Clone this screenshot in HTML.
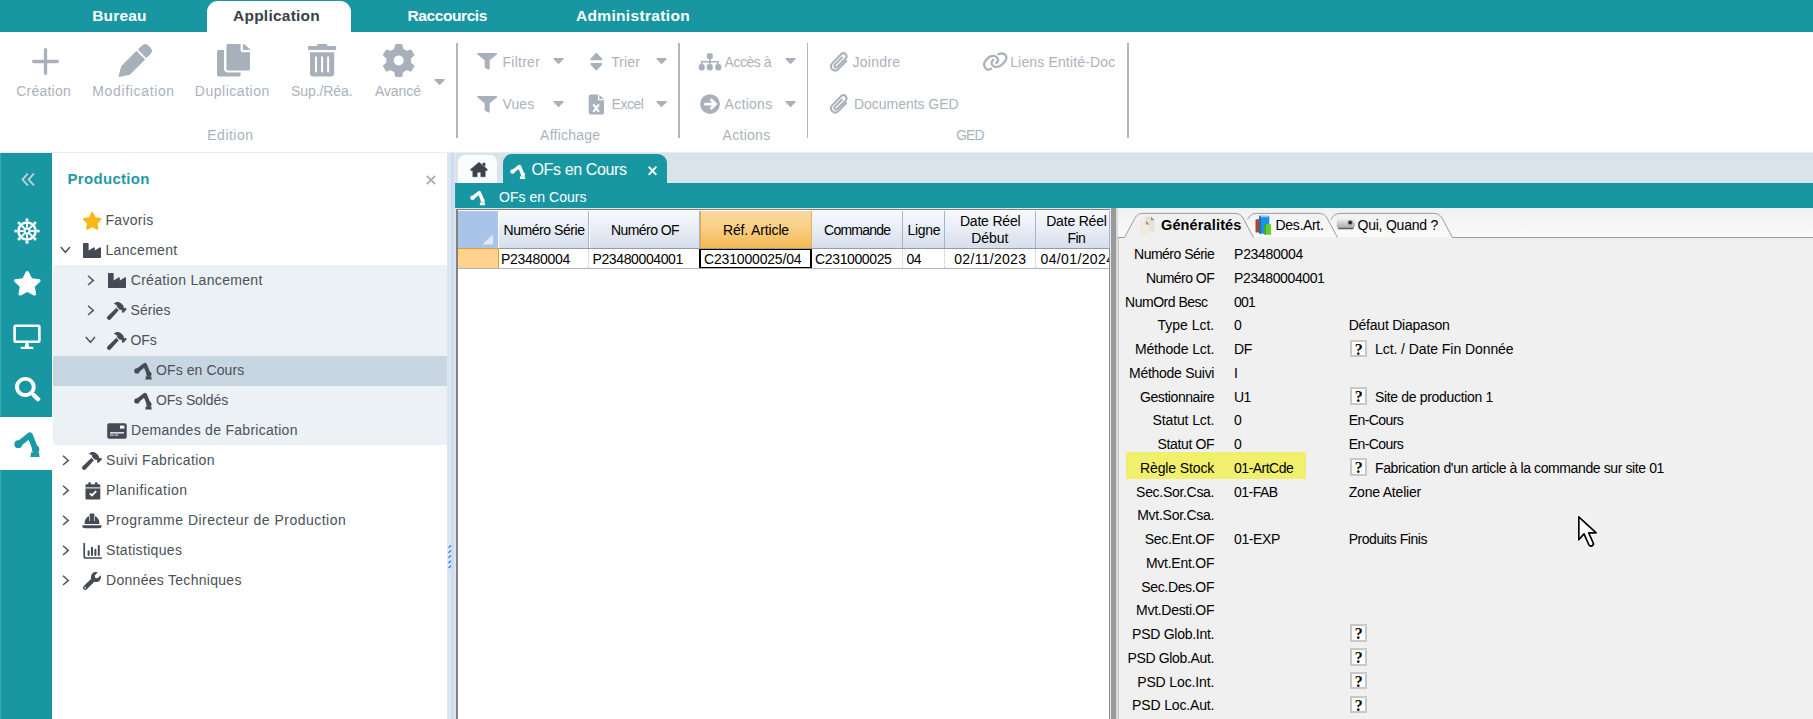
<!DOCTYPE html>
<html lang="fr"><head><meta charset="utf-8"><title>OFs en Cours</title>
<style>
html,body{margin:0;padding:0}
body{width:1813px;height:719px;overflow:hidden;position:relative;background:#fff;font-family:"Liberation Sans", sans-serif;}
.t{position:absolute;white-space:pre;line-height:20px;height:20px;}
.a{position:absolute}
svg{position:absolute;overflow:visible}

.teal{background:#1897a2}
.sep{position:absolute;top:43px;height:95px;width:1.4px;background:#b1b7c1}
.gh{position:absolute;top:211px;height:37px;background:linear-gradient(#f7f9fc 0%,#e9eef6 45%,#d6deeb 100%);border-right:1px solid #9fb6d4;box-sizing:border-box}
.gc{position:absolute;top:249px;height:19px;background:#fff;border-right:1px dotted #c4c4c4;box-sizing:border-box}
.q{position:absolute;left:1350.2px;width:17px;height:17.5px;box-sizing:border-box;border:2px solid #c8c8c8;background:#fff;font-family:"Liberation Serif",serif;font-weight:700;font-size:16px;line-height:15.5px;text-align:center;color:#000}

</style></head><body>
<div class="a" style="left:0px;top:0px;width:1813px;height:32px;background:#1897a2;"></div>
<div class="a" style="left:207px;top:1px;width:144px;height:31px;background:#fff;border-radius:11px 11px 0 0"></div>
<div class="sep" style="left:456.4px"></div>
<div class="sep" style="left:678.4px"></div>
<div class="sep" style="left:807.1px"></div>
<div class="sep" style="left:1127.2px"></div>
<div class="a" style="left:0px;top:152px;width:1813px;height:567px;background:#d9e3ec;"></div>
<div class="a" style="left:0px;top:152px;width:1813px;height:1px;background:#e6edf3;"></div>
<div class="a" style="left:0px;top:153px;width:52.5px;height:566px;background:#1897a2;"></div>
<div class="a" style="left:0px;top:153px;width:1px;height:566px;background:#3ba8b2;"></div>
<div class="a" style="left:0px;top:416.5px;width:52.5px;height:53.8px;background:#fff;"></div>
<div class="a" style="left:52px;top:153px;width:395px;height:566px;background:#fff;"></div>
<div class="a" style="left:53.2px;top:265.4px;width:394px;height:180px;background:#ecf1f5;"></div>
<div class="a" style="left:53.2px;top:355.5px;width:394px;height:30px;background:#c8d6e2;"></div>
<div class="a" style="left:447px;top:153px;width:8.5px;height:566px;background:linear-gradient(90deg,#dde6ef 0%,#dbe5ee 42%,#c9dcf5 50%,#c9dcf5 70%,#dbe4ec 80%,#dfe6ee 100%);"></div>
<div class="a" style="left:458px;top:155px;width:39px;height:28px;background:#fbfcfd;border-radius:7px 7px 0 0"></div>
<div class="a" style="left:503.3px;top:154.4px;width:163.5px;height:29.6px;background:#1897a2;border-radius:9px 9px 0 0"></div>
<div class="a" style="left:455px;top:183px;width:1358px;height:25px;background:#1897a2;"></div>
<div class="a" style="left:455px;top:208px;width:656px;height:511px;background:#fff;"></div>
<div class="a" style="left:455px;top:208px;width:656px;height:1.5px;background:#e2e2e2;"></div>
<div class="a" style="left:455px;top:208px;width:1px;height:511px;background:#e2e2e2;"></div>
<div class="a" style="left:456.2px;top:209.5px;width:1.6px;height:510px;background:#828282;"></div>
<div class="a" style="left:456px;top:209.2px;width:654px;height:1.2px;background:#808080;"></div>
<div class="a" style="left:458px;top:248px;width:652px;height:1px;background:#9a9a9a;"></div>
<div class="a" style="left:458.4px;top:211px;width:39.9px;height:37px;background:#a9c4e9;"></div>
<svg style="left:482px;top:233.500px" width="11" height="11" viewBox="0 0 11 11"><path d="M11 0.500V10.500H0.500z" fill="#e2eaf7"/></svg>
<div class="gh" style="left:499px;width:90px"></div>
<div class="gc" style="left:499px;width:90px"></div>
<div class="gh" style="left:590px;width:110px"></div>
<div class="gc" style="left:590px;width:110px"></div>
<div class="gh" style="left:700px;width:112px;background:linear-gradient(#f9d9a0 0%,#f8cf85 45%,#f2b953 100%);border-right:1px solid #e8b25a;border-left:1px solid #f0a63c"></div>
<div class="gc" style="left:700px;width:112px"></div>
<div class="gh" style="left:812px;width:91px"></div>
<div class="gc" style="left:812px;width:91px"></div>
<div class="gh" style="left:903px;width:42px"></div>
<div class="gc" style="left:903px;width:42px"></div>
<div class="gh" style="left:945px;width:91px"></div>
<div class="gc" style="left:945px;width:91px"></div>
<div class="gh" style="left:1036px;width:74px"></div>
<div class="gc" style="left:1036px;width:74px"></div>
<div class="a" style="left:457.5px;top:248px;width:41.2px;height:20.6px;background:#ffd28e;border-right:1px solid #f29536;border-top:1px solid #f29536;border-bottom:1px solid #f29536;box-sizing:border-box"></div>
<div class="a" style="left:458px;top:268px;width:652px;height:1px;background:#b4b4b4;"></div>
<div class="a" style="left:699.2px;top:248.6px;width:113.3px;height:19.6px;background:#fff;border:2px solid #000;border-top-width:1.5px;border-bottom-width:1.5px;box-sizing:border-box"></div>
<div class="a" style="left:1036px;top:249px;width:73px;height:19px;overflow:hidden"><span class="t" style="left:4.5px;top:-0.3px;font-size:14px;letter-spacing:0.38px">04/01/2024</span></div>
<div class="a" style="left:1108.8px;top:249px;width:1.3px;height:470px;background:#8c8c8c;"></div>
<div class="a" style="left:1110.1px;top:208px;width:1.1px;height:511px;background:#e8e8e8;"></div>
<div class="a" style="left:1111.2px;top:208px;width:4.6px;height:511px;background:#9a9a9a;"></div>
<div class="a" style="left:1115.8px;top:208px;width:1.8px;height:511px;background:#dadada;"></div>
<div class="a" style="left:1117.6px;top:208px;width:696px;height:511px;background:#f0f0f0;"></div>
<div class="a" style="left:1117.6px;top:208px;width:696px;height:29px;background:linear-gradient(#f0f0f0,#fafafa);"></div>
<div class="a" style="left:1117.6px;top:237.5px;width:1.1px;height:482px;background:#c6c6c6;"></div>
<svg style="left:1116px;top:208px" width="697" height="32" viewBox="0 0 697 32">
<path d="M215 11.500 Q218 5.400 224 5.400 L318 5.400 Q323.500 5.400 326 10 L336.500 29.500 L697 29.500" fill="none" stroke="#9b9b9b" stroke-width="1"/>
<path d="M131.500 11.500 Q134.500 5.400 140.500 5.400 L203 5.400 Q208.500 5.400 211 10 L221.500 29.500" fill="none" stroke="#9b9b9b" stroke-width="1"/>
<path d="M2 29.500 L8.500 29.500 L19 10 Q21.500 5.400 27 5.400 L119 5.400 Q124.500 5.400 127 10 L137.500 29.500" fill="#f0f0f0" stroke="#9b9b9b" stroke-width="1"/>
</svg>
<div class="a" style="left:1126px;top:452px;width:180px;height:27px;background:#f1f06c;"></div>
<div class="q" style="top:339.6px">?</div>
<div class="q" style="top:387.0px">?</div>
<div class="q" style="top:458.3px">?</div>
<div class="q" style="top:624.4px">?</div>
<div class="q" style="top:648.2px">?</div>
<div class="q" style="top:671.9px">?</div>
<div class="q" style="top:695.7px">?</div>
<svg style="left:448px;top:545px" width="6" height="24" viewBox="0 0 6 24"><path d="M0.500 2.6l2.500-2.200" stroke="#2f7fe0" stroke-width="1.300"/><path d="M0.500 7.7l2.500-2.200" stroke="#2f7fe0" stroke-width="1.300"/><path d="M0.500 12.8l2.500-2.200" stroke="#2f7fe0" stroke-width="1.300"/><path d="M0.500 17.9l2.500-2.200" stroke="#2f7fe0" stroke-width="1.300"/><path d="M0.500 23.0l2.500-2.200" stroke="#2f7fe0" stroke-width="1.300"/></svg>
<svg style="left:31px;top:47px" width="29" height="29" viewBox="0 0 29 29"><path d="M14.5 2.700V26.300M2.700 14.500H26.300" stroke="#a8b0bb" stroke-width="3.300" stroke-linecap="round" fill="none"/></svg>
<svg style="left:118px;top:44px" width="34" height="33" viewBox="0 0 34 33"><path d="M1 32.500 L3.800 22 L18.500 7.300 L26.700 15.500 L12 30.200 Z" fill="#a8b0bb" stroke="#a8b0bb" stroke-width="1" stroke-linejoin="round"/><path d="M20.300 5.600 L24.600 1.500 Q27.300 -0.700 30 1.600 L32.400 4 Q34.700 6.700 32.500 9.400 L28.300 13.700 Z" fill="#a8b0bb" stroke="#a8b0bb" stroke-width="1" stroke-linejoin="round"/></svg>
<svg style="left:217.4px;top:44.2px" width="33" height="32.6" viewBox="0 0 448 512" preserveAspectRatio="none"><path d="M320 448v40c0 13.255-10.745 24-24 24H24c-13.255 0-24-10.745-24-24V120c0-13.255 10.745-24 24-24h72v296c0 30.879 25.121 56 56 56h168zm0-344V0H152c-13.255 0-24 10.745-24 24v368c0 13.255 10.745 24 24 24h272c13.255 0 24-10.745 24-24V128H344c-13.200 0-24-10.800-24-24zm120.971-31.029L375.029 7.029A24 24 0 0 0 358.059 0H352v96h96v-6.059a24 24 0 0 0-7.029-16.970z" fill="#a8b0bb"/></svg>
<svg style="left:307.7px;top:44.2px" width="28.2" height="32.6" viewBox="0 0 448 512" preserveAspectRatio="none"><path d="M32 464a48 48 0 0 0 48 48h288a48 48 0 0 0 48-48V128H32zm272-256a16 16 0 0 1 32 0v224a16 16 0 0 1-32 0zm-96 0a16 16 0 0 1 32 0v224a16 16 0 0 1-32 0zm-96 0a16 16 0 0 1 32 0v224a16 16 0 0 1-32 0zM432 32H312l-9.400-18.700A24 24 0 0 0 281.100 0H166.800a23.720 23.720 0 0 0-21.400 13.300L136 32H16A16 16 0 0 0 0 48v32a16 16 0 0 0 16 16h416a16 16 0 0 0 16-16V48a16 16 0 0 0-16-16z" fill="#a8b0bb"/></svg>
<svg style="left:382px;top:44px" width="33" height="33" viewBox="0 0 33 33"><path d="M13.16 5.45 L14.04 1.03 L19.36 1.03 L20.24 5.45 L24.50 7.91 L28.77 6.46 L31.43 11.06 L28.04 14.04 L28.04 18.96 L31.43 21.94 L28.77 26.54 L24.50 25.09 L20.24 27.55 L19.36 31.97 L14.04 31.97 L13.16 27.55 L8.90 25.09 L4.63 26.54 L1.97 21.94 L5.36 18.96 L5.36 14.04 L1.97 11.06 L4.63 6.46 L8.90 7.91Z M22.70 16.50 A6.0 6.0 0 1 0 10.70 16.50 A6.0 6.0 0 1 0 22.70 16.50Z" fill="#a8b0bb" fill-rule="evenodd" stroke="#a8b0bb" stroke-width="2" stroke-linejoin="round"/></svg>
<svg style="left:433.8px;top:79.1px" width="11.2" height="6.2" viewBox="0 192 320 176" preserveAspectRatio="none"><path d="M31.300 192h257.300c17.800 0 26.700 21.500 14.100 34.100L174.100 354.800c-7.800 7.800-20.500 7.800-28.300 0L17.200 226.100C4.600 213.500 13.500 192 31.300 192z" fill="#a8b0bb"/></svg>
<svg style="left:477px;top:53.4px" width="20.3" height="16.6" viewBox="0 0 512 512" preserveAspectRatio="none"><path d="M487.976 0H24.028C2.710 0-8.047 25.866 7.058 40.971L192 225.941V432c0 7.831 3.821 15.170 10.237 19.662l80 55.980C298.020 518.690 320 507.493 320 487.980V225.941l184.947-184.970C520.021 25.896 509.338 0 487.976 0z" fill="#a8b0bb"/></svg>
<svg style="left:477px;top:95.6px" width="20.3" height="16.6" viewBox="0 0 512 512" preserveAspectRatio="none"><path d="M487.976 0H24.028C2.710 0-8.047 25.866 7.058 40.971L192 225.941V432c0 7.831 3.821 15.170 10.237 19.662l80 55.980C298.020 518.690 320 507.493 320 487.980V225.941l184.947-184.970C520.021 25.896 509.338 0 487.976 0z" fill="#a8b0bb"/></svg>
<svg style="left:552.5px;top:58.3px" width="11.1" height="6.3" viewBox="0 192 320 176" preserveAspectRatio="none"><path d="M31.300 192h257.300c17.800 0 26.700 21.500 14.100 34.100L174.100 354.800c-7.800 7.800-20.500 7.800-28.300 0L17.200 226.100C4.600 213.500 13.500 192 31.300 192z" fill="#a8b0bb"/></svg>
<svg style="left:656.4px;top:58.3px" width="11.1" height="6.3" viewBox="0 192 320 176" preserveAspectRatio="none"><path d="M31.300 192h257.300c17.800 0 26.700 21.500 14.100 34.100L174.100 354.800c-7.800 7.800-20.500 7.800-28.300 0L17.200 226.100C4.600 213.500 13.500 192 31.300 192z" fill="#a8b0bb"/></svg>
<svg style="left:785.2px;top:58.3px" width="11.1" height="6.3" viewBox="0 192 320 176" preserveAspectRatio="none"><path d="M31.300 192h257.300c17.800 0 26.700 21.500 14.100 34.100L174.100 354.800c-7.800 7.800-20.500 7.800-28.300 0L17.200 226.100C4.600 213.500 13.500 192 31.300 192z" fill="#a8b0bb"/></svg>
<svg style="left:552.5px;top:101px" width="11.1" height="6.3" viewBox="0 192 320 176" preserveAspectRatio="none"><path d="M31.300 192h257.300c17.800 0 26.700 21.500 14.100 34.100L174.100 354.800c-7.800 7.800-20.500 7.800-28.300 0L17.200 226.100C4.600 213.500 13.500 192 31.300 192z" fill="#a8b0bb"/></svg>
<svg style="left:656.4px;top:101px" width="11.1" height="6.3" viewBox="0 192 320 176" preserveAspectRatio="none"><path d="M31.300 192h257.300c17.800 0 26.700 21.500 14.100 34.100L174.100 354.800c-7.800 7.800-20.500 7.800-28.300 0L17.200 226.100C4.600 213.500 13.500 192 31.300 192z" fill="#a8b0bb"/></svg>
<svg style="left:785.2px;top:101px" width="11.1" height="6.3" viewBox="0 192 320 176" preserveAspectRatio="none"><path d="M31.300 192h257.300c17.800 0 26.700 21.500 14.100 34.100L174.100 354.800c-7.800 7.800-20.500 7.800-28.300 0L17.200 226.100C4.600 213.500 13.500 192 31.300 192z" fill="#a8b0bb"/></svg>
<svg style="left:589.9px;top:53.4px" width="12.7" height="17.3" viewBox="9 57 302 398" preserveAspectRatio="none"><path d="M41 288h238c21.400 0 32.100 25.900 17 41L177 448c-9.400 9.400-24.600 9.400-33.900 0L24 329c-15.100-15.100-4.400-41 17-41zm255-105L177 64c-9.400-9.400-24.600-9.400-33.900 0L24 183c-15.100 15.100-4.400 41 17 41h238c21.400 0 32.100-25.900 17-41z" fill="#a8b0bb"/></svg>
<svg style="left:588px;top:94px" width="17" height="21" viewBox="0 0 17 21"><path d="M2.700 0.500 H10 V6.300 H16 V18.500 Q16 20.500 14 20.500 H2.700 Q0.700 20.500 0.700 18.500 V2.500 Q0.700 0.500 2.700 0.500Z M11.300 0.700 L15.800 5 H11.300Z" fill="#a8b0bb" /><path d="M5.300 10.300 L11 18 M11 10.300 L5.300 18" stroke="#fff" stroke-width="2.100" fill="none"/></svg>
<svg style="left:698px;top:53px" width="24" height="18" viewBox="0 0 24 18"><rect x="8.900" y="0.300" width="5.800" height="5.600" rx="1.300" fill="#a8b0bb"/><path d="M11.800 5.500 V11.500 M3.700 11.500 V8.800 H19.900 V11.500" stroke="#a8b0bb" stroke-width="1.600" fill="none"/><rect x="0.7" y="11" width="6" height="6.400" rx="2.300" fill="#a8b0bb"/><rect x="8.8" y="11" width="6" height="6.400" rx="2.300" fill="#a8b0bb"/><rect x="17.3" y="11" width="6" height="6.400" rx="2.300" fill="#a8b0bb"/></svg>
<svg style="left:700px;top:94px" width="20" height="20" viewBox="0 0 20 20"><circle cx="10" cy="10.100" r="9.900" fill="#a8b0bb"/><path d="M4.300 10.100 H13.800 M10.600 5.300 L15.500 10.100 L10.600 14.900" stroke="#fff" stroke-width="2.800" fill="none" stroke-linecap="butt" stroke-linejoin="miter"/></svg>
<svg style="left:829.2px;top:52.3px" width="19.6" height="20.7" viewBox="0 0 18 19"><path d="M15.800 8.300 L8.600 15.700 Q5.700 18.400 3 15.900 Q0.400 13.100 3.100 10.200 L11.300 1.900 Q13.300 0.100 15.300 1.900 Q17.100 3.900 15.300 5.900 L7.500 13.800 Q6.300 14.800 5.300 13.800 Q4.400 12.700 5.400 11.600 L11.900 5" stroke="#a8b0bb" stroke-width="1.850" fill="none" stroke-linecap="round" stroke-linejoin="round"/></svg>
<svg style="left:829.2px;top:93.7px" width="19.6" height="20.7" viewBox="0 0 18 19"><path d="M15.800 8.300 L8.600 15.700 Q5.700 18.400 3 15.900 Q0.400 13.100 3.100 10.200 L11.300 1.900 Q13.300 0.100 15.300 1.900 Q17.100 3.900 15.300 5.900 L7.500 13.800 Q6.300 14.800 5.300 13.800 Q4.400 12.700 5.400 11.600 L11.900 5" stroke="#a8b0bb" stroke-width="1.850" fill="none" stroke-linecap="round" stroke-linejoin="round"/></svg>
<svg style="left:975px;top:45px" width="40" height="35" viewBox="0 0 40 35"><g fill="none" stroke="#a8b0bb" stroke-width="2.200" stroke-linecap="round"><path d="M16.30 23.70 C15.70 23.87 13.75 24.92 12.70 24.70 C11.65 24.48 10.62 23.35 10.00 22.40 C9.38 21.45 8.83 20.18 9.00 19.00 C9.17 17.82 10.05 16.52 11.00 15.30 C11.95 14.08 13.48 12.45 14.70 11.70 C15.92 10.95 17.13 10.70 18.30 10.80 C19.47 10.90 20.88 11.55 21.70 12.30 C22.52 13.05 23.27 14.30 23.20 15.30 C23.13 16.30 21.62 17.80 21.30 18.30"/><path d="M23.20 9.30 C23.78 9.13 25.62 8.30 26.70 8.30 C27.78 8.30 28.92 8.57 29.70 9.30 C30.48 10.03 31.40 11.47 31.40 12.70 C31.40 13.93 30.65 15.37 29.70 16.70 C28.75 18.03 27.03 19.82 25.70 20.70 C24.37 21.58 22.93 21.95 21.70 22.00 C20.47 22.05 19.17 21.67 18.30 21.00 C17.43 20.33 16.55 19.05 16.50 18.00 C16.45 16.95 17.75 15.25 18.00 14.70"/></g></svg>
<svg style="left:21px;top:173px" width="14" height="13" viewBox="0 0 14 13"><path d="M4.800 0.500 L0.800 6.500 L4.800 12.500 M9.300 0.500 L5.300 6.500 L9.300 12.500" transform="translate(0.4,0) scale(1.35,1)" stroke="#bdd3d6" stroke-width="1.500" fill="none"/></svg>
<svg style="left:14.2px;top:218.4px" width="26" height="26" viewBox="0 0 26 26"><g transform="translate(13 13)" fill="none" stroke="#fff"><circle r="8.600" stroke-width="2.500"/><circle r="2.500" stroke-width="1.900"/><path d="M3.20 0.00 L7.80 0.00" stroke-width="1.800"/><circle cx="11.20" cy="0.00" r="1.600" fill="#fff" stroke="none"/><path d="M2.26 2.26 L5.52 5.52" stroke-width="1.800"/><circle cx="7.92" cy="7.92" r="1.600" fill="#fff" stroke="none"/><path d="M0.00 3.20 L0.00 7.80" stroke-width="1.800"/><circle cx="0.00" cy="11.20" r="1.600" fill="#fff" stroke="none"/><path d="M-2.26 2.26 L-5.52 5.52" stroke-width="1.800"/><circle cx="-7.92" cy="7.92" r="1.600" fill="#fff" stroke="none"/><path d="M-3.20 0.00 L-7.80 0.00" stroke-width="1.800"/><circle cx="-11.20" cy="0.00" r="1.600" fill="#fff" stroke="none"/><path d="M-2.26 -2.26 L-5.52 -5.52" stroke-width="1.800"/><circle cx="-7.92" cy="-7.92" r="1.600" fill="#fff" stroke="none"/><path d="M-0.00 -3.20 L-0.00 -7.80" stroke-width="1.800"/><circle cx="-0.00" cy="-11.20" r="1.600" fill="#fff" stroke="none"/><path d="M2.26 -2.26 L5.52 -5.52" stroke-width="1.800"/><circle cx="7.92" cy="-7.92" r="1.600" fill="#fff" stroke="none"/></g></svg>
<svg style="left:13.6px;top:271px" width="26.6" height="24.5" viewBox="20 0 536 510" preserveAspectRatio="none"><path d="M259.3 17.8L194 150.2 47.9 171.5c-26.200 3.800-36.700 36.100-17.700 54.600l105.700 103-25 145.500c-4.500 26.300 23.200 46 46.400 33.700L288 439.600l130.700 68.700c23.200 12.200 50.900-7.400 46.400-33.700l-25-145.500 105.700-103c19-18.500 8.500-50.800-17.700-54.600L382 150.200 316.700 17.800c-11.700-23.600-45.600-23.900-57.400 0z" fill="#fff"/></svg>
<svg style="left:13px;top:323.5px" width="28" height="26" viewBox="0 0 28 26"><path d="M2.800 0.500 H25.200 Q27.700 0.500 27.700 3 V16.500 Q27.700 19 25.200 19 H2.800 Q0.300 19 0.300 16.500 V3 Q0.300 0.500 2.800 0.500Z M2.900 3.100 V16.400 H25.100 V3.100Z" fill="#fff" fill-rule="evenodd"/><path d="M12.500 19 h3 l0.600 4 h-4.200z" fill="#fff"/><rect x="7.600" y="22.800" width="12.800" height="2.200" rx="1.100" fill="#fff"/></svg>
<svg style="left:14.5px;top:377px" width="25.5" height="24.5" viewBox="0 0 512 512" preserveAspectRatio="none"><path d="M505 442.700L405.300 343c-4.500-4.500-10.600-7-17-7H372c27.600-35.300 44-79.700 44-128C416 93.100 322.900 0 208 0S0 93.100 0 208s93.100 208 208 208c48.300 0 92.700-16.400 128-44v16.300c0 6.400 2.500 12.500 7 17l99.700 99.700c9.400 9.400 24.600 9.400 33.900 0l28.300-28.300c9.400-9.400 9.400-24.600.1-34zM208 336c-70.700 0-128-57.200-128-128 0-70.700 57.200-128 128-128 70.700 0 128 57.200 128 128 0 70.700-57.200 128-128 128z" fill="#fff"/></svg>
<svg style="left:13.7px;top:431px" width="26" height="26" viewBox="0 0 26 26" preserveAspectRatio="none"><circle cx="4.300" cy="13.200" r="3.900" fill="#1a9aa6"/><path d="M7 11.300 L15.800 4.200 L21.200 17.500" stroke="#1a9aa6" stroke-width="5.800" fill="none" stroke-linejoin="round" stroke-linecap="round"/><circle cx="21.600" cy="18.300" r="3.700" fill="#1a9aa6"/><path d="M17.200 21.300 H25 L25.600 26 H16.400Z" fill="#1a9aa6"/></svg>
<svg style="left:82.5px;top:211.5px" width="18.5" height="17.8" viewBox="20 0 536 510" preserveAspectRatio="none"><path d="M259.3 17.8L194 150.2 47.9 171.5c-26.200 3.800-36.700 36.100-17.700 54.600l105.700 103-25 145.500c-4.500 26.300 23.200 46 46.400 33.700L288 439.600l130.700 68.700c23.200 12.200 50.900-7.400 46.400-33.700l-25-145.500 105.700-103c19-18.500 8.500-50.800-17.700-54.600L382 150.200 316.700 17.800c-11.700-23.600-45.600-23.900-57.400 0z" fill="#fdb714"/></svg>
<svg style="left:82.5px;top:243px" width="18" height="15" viewBox="0 32 512 448" preserveAspectRatio="none"><path d="M475.115 163.781L336 252.309v-68.280c0-18.916-20.931-30.399-36.885-20.248L160 252.309V56c0-13.255-10.745-24-24-24H24C10.745 32 0 42.745 0 56v400c0 13.255 10.745 24 24 24h464c13.255 0 24-10.745 24-24V184.029c0-18.917-20.931-30.399-36.885-20.248z" fill="#454a54"/></svg>
<svg style="left:108px;top:273px" width="18" height="15" viewBox="0 32 512 448" preserveAspectRatio="none"><path d="M475.115 163.781L336 252.309v-68.280c0-18.916-20.931-30.399-36.885-20.248L160 252.309V56c0-13.255-10.745-24-24-24H24C10.745 32 0 42.745 0 56v400c0 13.255 10.745 24 24 24h464c13.255 0 24-10.745 24-24V184.029c0-18.917-20.931-30.399-36.885-20.248z" fill="#454a54"/></svg>
<svg style="left:106.7px;top:301.5px" width="19.7" height="18" viewBox="0 0 576 512" preserveAspectRatio="none"><path d="M571.310 193.940l-22.630-22.630c-6.250-6.250-16.380-6.250-22.630 0l-11.310 11.310-28.900-28.900c5.630-21.310.360-44.900-16.350-61.610l-45.250-45.250c-62.480-62.480-163.790-62.480-226.280 0l90.510 45.250v18.750c0 16.970 6.740 33.250 18.750 45.250l49.140 49.140c16.710 16.710 40.300 21.980 61.610 16.350l28.900 28.900-11.310 11.310c-6.250 6.250-6.250 16.380 0 22.630l22.630 22.630c6.250 6.250 16.380 6.250 22.630 0l90.510-90.510c6.230-6.240 6.230-16.370-.020-22.620zm-286.720-15.200c-3.700-3.700-6.840-7.790-9.850-11.950L19.640 404.960c-25.570 23.880-26.260 64.190-1.530 88.930s65.050 24.050 88.930-1.530l238.130-255.070c-3.960-2.910-7.900-5.870-11.440-9.410l-49.140-49.140z" fill="#454a54"/></svg>
<svg style="left:106.7px;top:331.5px" width="19.7" height="18" viewBox="0 0 576 512" preserveAspectRatio="none"><path d="M571.310 193.940l-22.630-22.630c-6.250-6.250-16.380-6.250-22.630 0l-11.310 11.310-28.900-28.900c5.630-21.310.360-44.900-16.350-61.610l-45.250-45.250c-62.480-62.480-163.790-62.480-226.280 0l90.510 45.250v18.750c0 16.970 6.740 33.250 18.750 45.250l49.140 49.140c16.710 16.710 40.300 21.980 61.610 16.350l28.900 28.900-11.310 11.310c-6.250 6.250-6.250 16.380 0 22.630l22.630 22.630c6.250 6.250 16.380 6.250 22.630 0l90.510-90.510c6.230-6.240 6.230-16.370-.020-22.620zm-286.720-15.200c-3.700-3.700-6.840-7.790-9.850-11.950L19.640 404.960c-25.570 23.880-26.260 64.190-1.530 88.930s65.050 24.050 88.930-1.530l238.130-255.070c-3.960-2.910-7.900-5.870-11.440-9.410l-49.140-49.140z" fill="#454a54"/></svg>
<svg style="left:81.7px;top:451.5px" width="20" height="18" viewBox="0 0 576 512" preserveAspectRatio="none"><path d="M571.310 193.940l-22.630-22.630c-6.250-6.250-16.380-6.250-22.630 0l-11.310 11.310-28.900-28.900c5.630-21.310.360-44.900-16.350-61.610l-45.250-45.250c-62.480-62.480-163.790-62.480-226.280 0l90.510 45.250v18.750c0 16.970 6.740 33.250 18.750 45.250l49.140 49.140c16.710 16.710 40.300 21.980 61.610 16.350l28.900 28.900-11.310 11.310c-6.250 6.250-6.250 16.380 0 22.630l22.630 22.630c6.250 6.250 16.380 6.250 22.630 0l90.510-90.510c6.230-6.240 6.230-16.370-.020-22.620zm-286.720-15.200c-3.700-3.700-6.840-7.790-9.850-11.950L19.640 404.960c-25.570 23.880-26.260 64.190-1.530 88.930s65.050 24.050 88.930-1.530l238.130-255.070c-3.960-2.910-7.900-5.870-11.440-9.410l-49.140-49.140z" fill="#454a54"/></svg>
<svg style="left:133.5px;top:361.7px" width="18" height="17.5" viewBox="0 0 26 26" preserveAspectRatio="none"><circle cx="4.300" cy="13.200" r="3.900" fill="#454a54"/><path d="M7 11.300 L15.800 4.200 L21.200 17.500" stroke="#454a54" stroke-width="5.800" fill="none" stroke-linejoin="round" stroke-linecap="round"/><circle cx="21.600" cy="18.300" r="3.700" fill="#454a54"/><path d="M17.200 21.300 H25 L25.600 26 H16.400Z" fill="#454a54"/></svg>
<svg style="left:133.5px;top:391.7px" width="18" height="17.5" viewBox="0 0 26 26" preserveAspectRatio="none"><circle cx="4.300" cy="13.200" r="3.900" fill="#454a54"/><path d="M7 11.300 L15.800 4.200 L21.200 17.500" stroke="#454a54" stroke-width="5.800" fill="none" stroke-linejoin="round" stroke-linecap="round"/><circle cx="21.600" cy="18.300" r="3.700" fill="#454a54"/><path d="M17.200 21.300 H25 L25.600 26 H16.400Z" fill="#454a54"/></svg>
<svg style="left:107px;top:422.5px" width="20" height="16" viewBox="0 0 20 16"><rect x="0.200" y="0.200" width="19.500" height="15.500" rx="2" fill="#454a54"/><rect x="13" y="2.600" width="4.400" height="3" fill="#fff"/><rect x="3" y="9.200" width="14" height="1.300" fill="#fff"/><rect x="3" y="11.500" width="3.600" height="1.200" fill="#cfd3d8"/><rect x="7.600" y="11.500" width="3.600" height="1.200" fill="#cfd3d8"/></svg>
<svg style="left:84.5px;top:481.5px" width="16" height="18" viewBox="0 0 16 18"><path d="M1.800 2.300 H14 Q15.300 2.300 15.300 3.600 V16.300 Q15.300 17.600 14 17.600 H1.800 Q0.500 17.600 0.500 16.300 V3.600 Q0.500 2.300 1.800 2.300Z" fill="#454a54"/><rect x="3.300" y="0.200" width="2.500" height="3.600" rx="0.600" fill="#454a54"/><rect x="10" y="0.200" width="2.500" height="3.600" rx="0.600" fill="#454a54"/><rect x="0.500" y="5.400" width="14.800" height="1" fill="#fff"/><path d="M4.800 11.300 L7 13.500 L11.200 9.200" stroke="#fff" stroke-width="1.900" fill="none"/></svg>
<svg style="left:81.5px;top:512.5px" width="20" height="16" viewBox="0 0 20 16"><path d="M2.500 11 Q2.500 4.500 7.600 2.800 V1.400 Q7.600 0.500 8.500 0.500 H11.500 Q12.400 0.500 12.400 1.400 V2.800 Q17.500 4.500 17.500 11Z" fill="#454a54"/><path d="M7.600 3 V8 M12.400 3 V8" stroke="#fff" stroke-width="0.700"/><path d="M0.400 12.300 H19.600 V13.500 Q19.600 15.300 17 15.300 H3 Q0.400 15.300 0.400 13.500Z" fill="#454a54"/></svg>
<svg style="left:83px;top:542.5px" width="19" height="16" viewBox="0 0 19 16"><path d="M1.200 0.500 V13.300 Q1.200 15 2.900 15 H18.300" stroke="#454a54" stroke-width="1.700" fill="none" stroke-linecap="round"/><path d="M5.600 8.300 V12 M9 4.800 V12 M12.400 6.800 V12 M15.800 3 V12" stroke="#454a54" stroke-width="2" fill="none" stroke-linecap="round"/></svg>
<svg style="left:83px;top:571.5px" width="18" height="18" viewBox="0 0 512 512" preserveAspectRatio="none"><path d="M507.730 109.100c-2.240-9.030-13.540-12.090-20.120-5.510l-74.360 74.360-67.880-11.310-11.310-67.880 74.360-74.360c6.620-6.620 3.430-17.900-5.660-20.160-47.380-11.740-99.550.910-136.580 37.930-39.640 39.640-50.550 97.100-34.050 147.200L18.740 402.760c-24.990 24.990-24.990 65.510 0 90.500 24.990 24.990 65.510 24.990 90.500 0l213.210-213.210c50.120 16.710 107.470 5.680 147.370-34.220 37.070-37.070 49.700-89.320 37.910-136.730zM64 472c-13.250 0-24-10.750-24-24 0-13.260 10.750-24 24-24s24 10.740 24 24c0 13.250-10.750 24-24 24z" fill="#454a54"/></svg>
<svg style="left:60.3px;top:246px" width="11" height="8" viewBox="0 0 11 8"><path d="M0.800 1 L5.400 6.300 L10 1" stroke="#50555e" stroke-width="1.500" fill="none"/></svg>
<svg style="left:87px;top:274.5px" width="8" height="11" viewBox="0 0 8 11"><path d="M1 0.800 L6.300 5.400 L1 10" stroke="#50555e" stroke-width="1.500" fill="none"/></svg>
<svg style="left:87px;top:304.5px" width="8" height="11" viewBox="0 0 8 11"><path d="M1 0.800 L6.300 5.400 L1 10" stroke="#50555e" stroke-width="1.500" fill="none"/></svg>
<svg style="left:85.3px;top:336px" width="11" height="8" viewBox="0 0 11 8"><path d="M0.800 1 L5.400 6.300 L10 1" stroke="#50555e" stroke-width="1.500" fill="none"/></svg>
<svg style="left:62.3px;top:454.5px" width="8" height="11" viewBox="0 0 8 11"><path d="M1 0.800 L6.300 5.400 L1 10" stroke="#50555e" stroke-width="1.500" fill="none"/></svg>
<svg style="left:62.3px;top:484.5px" width="8" height="11" viewBox="0 0 8 11"><path d="M1 0.800 L6.300 5.400 L1 10" stroke="#50555e" stroke-width="1.500" fill="none"/></svg>
<svg style="left:62.3px;top:514.5px" width="8" height="11" viewBox="0 0 8 11"><path d="M1 0.800 L6.300 5.400 L1 10" stroke="#50555e" stroke-width="1.500" fill="none"/></svg>
<svg style="left:62.3px;top:544.5px" width="8" height="11" viewBox="0 0 8 11"><path d="M1 0.800 L6.300 5.400 L1 10" stroke="#50555e" stroke-width="1.500" fill="none"/></svg>
<svg style="left:62.3px;top:574.5px" width="8" height="11" viewBox="0 0 8 11"><path d="M1 0.800 L6.300 5.400 L1 10" stroke="#50555e" stroke-width="1.500" fill="none"/></svg>
<svg style="left:426px;top:174.5px" width="10" height="10" viewBox="0 0 10 10"><path d="M0.800 0.800 L9.200 9.200 M9.200 0.800 L0.800 9.200" stroke="#a4acb7" stroke-width="1.700"/></svg>
<svg style="left:469.5px;top:162px" width="18" height="15" viewBox="0 0 18 15"><path d="M9 0.300 L17.600 7.600 L16.300 9.100 L15.200 8.200 V14.800 H10.800 V10.300 H7.200 V14.800 H2.800 V8.200 L1.700 9.100 L0.400 7.600 Z M12.800 1 H15 V4.600 L12.800 2.700Z" fill="#3c414a" stroke="#3c414a" stroke-width="0.500" stroke-linejoin="round"/></svg>
<svg style="left:510px;top:163.8px" width="15.5" height="15" viewBox="0 0 26 26" preserveAspectRatio="none"><circle cx="4.300" cy="13.200" r="3.900" fill="#fff"/><path d="M7 11.300 L15.800 4.200 L21.200 17.500" stroke="#fff" stroke-width="5.800" fill="none" stroke-linejoin="round" stroke-linecap="round"/><circle cx="21.600" cy="18.300" r="3.700" fill="#fff"/><path d="M17.200 21.300 H25 L25.600 26 H16.400Z" fill="#fff"/></svg>
<svg style="left:469.7px;top:190.3px" width="15.3" height="15.2" viewBox="0 0 26 26" preserveAspectRatio="none"><circle cx="4.300" cy="13.200" r="3.900" fill="#fff"/><path d="M7 11.300 L15.800 4.200 L21.200 17.500" stroke="#fff" stroke-width="5.800" fill="none" stroke-linejoin="round" stroke-linecap="round"/><circle cx="21.600" cy="18.300" r="3.700" fill="#fff"/><path d="M17.200 21.300 H25 L25.600 26 H16.400Z" fill="#fff"/></svg>
<svg style="left:648px;top:166px" width="9" height="9.5" viewBox="0 0 9 9.500"><path d="M0.700 0.700 L8.300 8.800 M8.300 0.700 L0.700 8.800" stroke="#fff" stroke-width="1.900"/></svg>
<svg style="left:1139px;top:215.5px" width="16" height="19" viewBox="0 0 16 19"><path d="M6.300 0.500 H12 L15.600 4.300 V15.300 H6.300Z" fill="#e7e0d3"/><path d="M12 0.500 L15.600 4.300 H12Z" fill="#9c958c"/><path d="M0.900 4.700 H6.800 L10.600 8.600 V19 H0.900Z" fill="#f0eadf"/><path d="M6.800 4.700 L10.600 8.600 H6.800Z" fill="#9c958c"/></svg>
<svg style="left:1254.5px;top:215px" width="17" height="20" viewBox="0 0 17 20"><path d="M0.500 5 Q0.500 4.300 1.200 4.300 H4.500 V17.500 H1.200 Q0.500 17.500 0.500 16.800Z" fill="#b5461f"/><path d="M4.100 1.600 Q4.100 0.700 5 0.700 H13.300 Q14.300 0.700 14.300 1.700 V18.800 H5 Q4.100 18.800 4.100 17.900Z" fill="#1f8fe6"/><path d="M4.100 1.600 Q4.100 0.700 5 0.700 H6 V18.800 H5 Q4.100 18.800 4.100 17.900Z" fill="#1670c2"/><path d="M5.500 1.300 H13.500 V2.200 H5.500Z" fill="#bfe0fa"/><path d="M9.400 10 Q9.400 9.200 10.200 9.200 H15.200 Q16 9.200 16 10 V19.800 H10.200 Q9.400 19.800 9.400 19Z" fill="#5fd02a"/><path d="M9.400 10 Q9.400 9.200 10.200 9.200 H10.800 V19.800 H10.200 Q9.400 19.800 9.400 19Z" fill="#3f9f18"/></svg>
<svg style="left:1335.5px;top:218px" width="20" height="12" viewBox="0 0 20 12"><defs><linearGradient id="pj" x1="0" y1="0" x2="0" y2="1"><stop offset="0" stop-color="#f2f2f2"/><stop offset="1" stop-color="#adadad"/></linearGradient></defs><path d="M0.800 1.500 Q0.800 0.500 1.800 0.500 H16 Q19 0.500 19 3.500 V7.500 Q19 9.300 17.200 9.300 H1.800 Q0.800 9.300 0.800 8.300Z" fill="url(#pj)"/><circle cx="14.200" cy="4.600" r="2.500" fill="#8a8a8a"/><circle cx="14.200" cy="4.600" r="1.700" fill="#0f2a12"/><path d="M1.500 9.500 H18 Q18 11.300 15 11.300 H4.500 Q1.500 11.300 1.500 9.500Z" fill="#5a5a5a"/></svg>
<!-- text -->
<span class="t" style="left:92.3px;top:6.1px;font-size:15.5px;color:#fff;letter-spacing:0.13px;font-weight:700;">Bureau</span>
<span class="t" style="left:233.0px;top:6.1px;font-size:15.5px;color:#3b3f46;letter-spacing:0.24px;font-weight:700;">Application</span>
<span class="t" style="left:407.5px;top:6.1px;font-size:15.5px;color:#fff;letter-spacing:-0.41px;font-weight:700;">Raccourcis</span>
<span class="t" style="left:576.0px;top:6.1px;font-size:15.5px;color:#fff;letter-spacing:0.33px;font-weight:700;">Administration</span>
<span class="t" style="left:16.2px;top:80.6px;font-size:14px;color:#abb2bd;letter-spacing:0.23px;">Création</span>
<span class="t" style="left:92.3px;top:80.6px;font-size:14px;color:#abb2bd;letter-spacing:0.65px;">Modification</span>
<span class="t" style="left:194.8px;top:80.6px;font-size:14px;color:#abb2bd;letter-spacing:0.52px;">Duplication</span>
<span class="t" style="left:291.0px;top:80.6px;font-size:14px;color:#abb2bd;letter-spacing:-0.09px;">Sup./Réa.</span>
<span class="t" style="left:374.9px;top:80.6px;font-size:14px;color:#abb2bd;letter-spacing:-0.06px;">Avancé</span>
<span class="t" style="left:207.3px;top:125.3px;font-size:14px;color:#abb2bd;letter-spacing:0.48px;">Edition</span>
<span class="t" style="left:502.5px;top:51.8px;font-size:14px;color:#abb2bd;letter-spacing:0.26px;">Filtrer</span>
<span class="t" style="left:611.2px;top:51.8px;font-size:14px;color:#abb2bd;letter-spacing:0.11px;">Trier</span>
<span class="t" style="left:502.5px;top:94.1px;font-size:14px;color:#abb2bd;letter-spacing:0.08px;">Vues</span>
<span class="t" style="left:611.5px;top:94.1px;font-size:14px;color:#abb2bd;letter-spacing:-0.45px;">Excel</span>
<span class="t" style="left:540.1px;top:125.3px;font-size:14px;color:#abb2bd;letter-spacing:0.23px;">Affichage</span>
<span class="t" style="left:724.5px;top:51.8px;font-size:14px;color:#abb2bd;letter-spacing:-0.46px;">Accès à</span>
<span class="t" style="left:724.5px;top:94.1px;font-size:14px;color:#abb2bd;letter-spacing:0.30px;">Actions</span>
<span class="t" style="left:722.5px;top:125.3px;font-size:14px;color:#abb2bd;letter-spacing:0.30px;">Actions</span>
<span class="t" style="left:852.5px;top:51.8px;font-size:14px;color:#abb2bd;letter-spacing:0.27px;">Joindre</span>
<span class="t" style="left:1010.2px;top:51.8px;font-size:14px;color:#abb2bd;letter-spacing:0.15px;">Liens Entité-Doc</span>
<span class="t" style="left:854.0px;top:94.1px;font-size:14px;color:#abb2bd;letter-spacing:-0.04px;">Documents GED</span>
<span class="t" style="left:956.2px;top:125.3px;font-size:14px;color:#abb2bd;letter-spacing:-1.00px;">GED</span>
<span class="t" style="left:67.5px;top:169.3px;font-size:15px;color:#1f9aa8;letter-spacing:0.31px;font-weight:700;">Production</span>
<span class="t" style="left:105.5px;top:210.1px;font-size:14px;color:#4b5059;letter-spacing:0.30px;">Favoris</span>
<span class="t" style="left:105.5px;top:240.1px;font-size:14px;color:#4b5059;letter-spacing:0.30px;">Lancement</span>
<span class="t" style="left:130.7px;top:270.1px;font-size:14px;color:#4b5059;letter-spacing:0.33px;">Création Lancement</span>
<span class="t" style="left:130.5px;top:300.1px;font-size:14px;color:#4b5059;letter-spacing:0.05px;">Séries</span>
<span class="t" style="left:130.5px;top:330.1px;font-size:14px;color:#4b5059;letter-spacing:-0.15px;">OFs</span>
<span class="t" style="left:156.0px;top:360.1px;font-size:14px;color:#4b5059;letter-spacing:0.10px;">OFs en Cours</span>
<span class="t" style="left:156.0px;top:390.1px;font-size:14px;color:#4b5059;letter-spacing:-0.11px;">OFs Soldés</span>
<span class="t" style="left:131.0px;top:420.1px;font-size:14px;color:#4b5059;letter-spacing:0.28px;">Demandes de Fabrication</span>
<span class="t" style="left:106.0px;top:450.1px;font-size:14px;color:#4b5059;letter-spacing:0.31px;">Suivi Fabrication</span>
<span class="t" style="left:106.0px;top:480.1px;font-size:14px;color:#4b5059;letter-spacing:0.46px;">Planification</span>
<span class="t" style="left:106.0px;top:510.1px;font-size:14px;color:#4b5059;letter-spacing:0.49px;">Programme Directeur de Production</span>
<span class="t" style="left:106.0px;top:540.1px;font-size:14px;color:#4b5059;letter-spacing:0.32px;">Statistiques</span>
<span class="t" style="left:106.0px;top:570.1px;font-size:14px;color:#4b5059;letter-spacing:0.29px;">Données Techniques</span>
<span class="t" style="left:531.5px;top:160.2px;font-size:16px;color:#fff;letter-spacing:-0.38px;">OFs en Cours</span>
<span class="t" style="left:499.0px;top:187.1px;font-size:14px;color:#fff;letter-spacing:0.03px;">OFs en Cours</span>
<span class="t" style="left:503.5px;top:220.1px;font-size:14px;color:#000;letter-spacing:-0.45px;">Numéro Série</span>
<span class="t" style="left:611.0px;top:220.1px;font-size:14px;color:#000;letter-spacing:-0.57px;">Numéro OF</span>
<span class="t" style="left:723.0px;top:220.1px;font-size:14px;color:#000;letter-spacing:-0.14px;">Réf. Article</span>
<span class="t" style="left:824.1px;top:220.1px;font-size:14px;color:#000;letter-spacing:-0.78px;">Commande</span>
<span class="t" style="left:907.5px;top:220.1px;font-size:14px;color:#000;letter-spacing:-0.29px;">Ligne</span>
<span class="t" style="left:959.9px;top:211.4px;font-size:14px;color:#000;letter-spacing:-0.19px;">Date Réel</span>
<span class="t" style="left:971.2px;top:227.6px;font-size:14px;color:#000;letter-spacing:-0.03px;">Début</span>
<span class="t" style="left:1046.2px;top:211.4px;font-size:14px;color:#000;letter-spacing:-0.19px;">Date Réel</span>
<span class="t" style="left:1067.5px;top:227.6px;font-size:14px;color:#000;letter-spacing:-0.55px;">Fin</span>
<span class="t" style="left:501.0px;top:248.6px;font-size:14px;color:#000;letter-spacing:-0.30px;">P23480004</span>
<span class="t" style="left:592.5px;top:248.6px;font-size:14px;color:#000;letter-spacing:-0.38px;">P23480004001</span>
<span class="t" style="left:704.0px;top:248.6px;font-size:14px;color:#000;letter-spacing:-0.17px;">C231000025/04</span>
<span class="t" style="left:815.1px;top:248.6px;font-size:14px;color:#000;letter-spacing:-0.38px;">C231000025</span>
<span class="t" style="left:906.5px;top:248.6px;font-size:14px;color:#000;letter-spacing:-0.44px;">04</span>
<span class="t" style="left:954.3px;top:248.6px;font-size:14px;color:#000;letter-spacing:0.29px;">02/11/2023</span>
<span class="t" style="left:1161.0px;top:215.3px;font-size:14.5px;color:#000;letter-spacing:0.14px;font-weight:700;">Généralités</span>
<span class="t" style="left:1275.5px;top:215.3px;font-size:14px;color:#000;letter-spacing:-0.32px;">Des.Art.</span>
<span class="t" style="left:1357.5px;top:215.3px;font-size:14px;color:#000;letter-spacing:-0.23px;">Qui, Quand ?</span>
<span class="t" style="left:1134.1px;top:244.1px;font-size:14px;color:#000;letter-spacing:-0.52px;">Numéro Série</span>
<span class="t" style="left:1234.1px;top:244.1px;font-size:14px;color:#000;letter-spacing:-0.30px;">P23480004</span>
<span class="t" style="left:1145.9px;top:267.9px;font-size:14px;color:#000;letter-spacing:-0.54px;">Numéro OF</span>
<span class="t" style="left:1234.1px;top:267.9px;font-size:14px;color:#000;letter-spacing:-0.38px;">P23480004001</span>
<span class="t" style="left:1125.1px;top:291.6px;font-size:14px;color:#000;letter-spacing:-0.50px;">NumOrd Besc</span>
<span class="t" style="left:1234.1px;top:291.6px;font-size:14px;color:#000;letter-spacing:-0.82px;">001</span>
<span class="t" style="left:1157.5px;top:315.4px;font-size:14px;color:#000;letter-spacing:-0.01px;">Type Lct.</span>
<span class="t" style="left:1234.1px;top:315.4px;font-size:14px;color:#000;letter-spacing:0.10px;">0</span>
<span class="t" style="left:1348.7px;top:315.4px;font-size:14px;color:#000;letter-spacing:-0.23px;">Défaut Diapason</span>
<span class="t" style="left:1134.9px;top:339.1px;font-size:14px;color:#000;letter-spacing:-0.14px;">Méthode Lct.</span>
<span class="t" style="left:1234.1px;top:339.1px;font-size:14px;color:#000;letter-spacing:-0.44px;">DF</span>
<span class="t" style="left:1375.0px;top:339.1px;font-size:14px;color:#000;letter-spacing:-0.07px;">Lct. / Date Fin Donnée</span>
<span class="t" style="left:1129.0px;top:362.8px;font-size:14px;color:#000;letter-spacing:-0.27px;">Méthode Suivi</span>
<span class="t" style="left:1234.1px;top:362.8px;font-size:14px;color:#000;letter-spacing:-0.49px;">I</span>
<span class="t" style="left:1140.0px;top:386.6px;font-size:14px;color:#000;letter-spacing:-0.43px;">Gestionnaire</span>
<span class="t" style="left:1234.1px;top:386.6px;font-size:14px;color:#000;letter-spacing:-0.75px;">U1</span>
<span class="t" style="left:1375.0px;top:386.6px;font-size:14px;color:#000;letter-spacing:-0.33px;">Site de production 1</span>
<span class="t" style="left:1152.5px;top:410.3px;font-size:14px;color:#000;letter-spacing:-0.12px;">Statut Lct.</span>
<span class="t" style="left:1234.1px;top:410.3px;font-size:14px;color:#000;letter-spacing:0.10px;">0</span>
<span class="t" style="left:1348.7px;top:410.3px;font-size:14px;color:#000;letter-spacing:-0.57px;">En-Cours</span>
<span class="t" style="left:1157.5px;top:434.1px;font-size:14px;color:#000;letter-spacing:-0.36px;">Statut OF</span>
<span class="t" style="left:1234.1px;top:434.1px;font-size:14px;color:#000;letter-spacing:0.10px;">0</span>
<span class="t" style="left:1348.7px;top:434.1px;font-size:14px;color:#000;letter-spacing:-0.57px;">En-Cours</span>
<span class="t" style="left:1140.0px;top:457.8px;font-size:14px;color:#000;letter-spacing:-0.12px;">Règle Stock</span>
<span class="t" style="left:1234.1px;top:457.8px;font-size:14px;color:#000;letter-spacing:-0.52px;">01-ArtCde</span>
<span class="t" style="left:1375.0px;top:457.8px;font-size:14px;color:#000;letter-spacing:-0.39px;">Fabrication d'un article à la commande sur site 01</span>
<span class="t" style="left:1136.1px;top:481.5px;font-size:14px;color:#000;letter-spacing:-0.30px;">Sec.Sor.Csa.</span>
<span class="t" style="left:1234.1px;top:481.5px;font-size:14px;color:#000;letter-spacing:-0.55px;">01-FAB</span>
<span class="t" style="left:1348.7px;top:481.5px;font-size:14px;color:#000;letter-spacing:-0.20px;">Zone Atelier</span>
<span class="t" style="left:1137.2px;top:505.3px;font-size:14px;color:#000;letter-spacing:-0.26px;">Mvt.Sor.Csa.</span>
<span class="t" style="left:1144.7px;top:529.0px;font-size:14px;color:#000;letter-spacing:-0.29px;">Sec.Ent.OF</span>
<span class="t" style="left:1234.1px;top:529.0px;font-size:14px;color:#000;letter-spacing:-0.42px;">01-EXP</span>
<span class="t" style="left:1348.7px;top:529.0px;font-size:14px;color:#000;letter-spacing:-0.47px;">Produits Finis</span>
<span class="t" style="left:1145.9px;top:552.8px;font-size:14px;color:#000;letter-spacing:-0.25px;">Mvt.Ent.OF</span>
<span class="t" style="left:1141.2px;top:576.5px;font-size:14px;color:#000;letter-spacing:-0.33px;">Sec.Des.OF</span>
<span class="t" style="left:1136.1px;top:600.2px;font-size:14px;color:#000;letter-spacing:-0.30px;">Mvt.Desti.OF</span>
<span class="t" style="left:1132.1px;top:624.0px;font-size:14px;color:#000;letter-spacing:-0.27px;">PSD Glob.Int.</span>
<span class="t" style="left:1127.4px;top:647.7px;font-size:14px;color:#000;letter-spacing:-0.33px;">PSD Glob.Aut.</span>
<span class="t" style="left:1137.2px;top:671.5px;font-size:14px;color:#000;letter-spacing:-0.13px;">PSD Loc.Int.</span>
<span class="t" style="left:1132.1px;top:695.2px;font-size:14px;color:#000;letter-spacing:-0.16px;">PSD Loc.Aut.</span>
<svg style="left:1577px;top:515px" width="24" height="36" viewBox="0 0 24 36"><path d="M1.800 1.800 L1.800 24.800 L7 18.900 L11.800 29.700 Q12.900 31.700 15 30.900 Q17 29.900 16.200 27.900 L11.700 17.800 L19.200 17.800 Z" fill="#fff" stroke="#fff" stroke-width="3.600" stroke-linejoin="round"/><path d="M1.800 1.800 L1.800 24.800 L7 18.900 L11.800 29.700 Q12.900 31.700 15 30.900 Q17 29.900 16.200 27.900 L11.700 17.800 L19.200 17.800 Z" fill="#fff" stroke="#000" stroke-width="1.700" stroke-linejoin="round"/></svg>
</body></html>
